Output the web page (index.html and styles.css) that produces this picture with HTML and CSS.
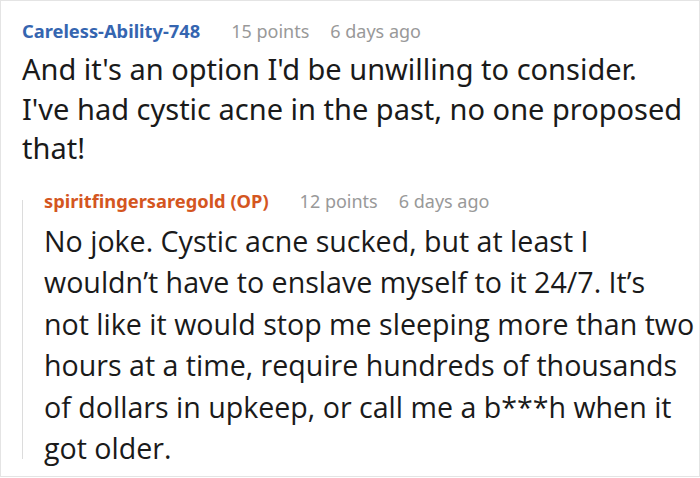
FILE: index.html
```html
<!DOCTYPE html>
<html>
<head>
<meta charset="utf-8">
<link rel="stylesheet" href="styles.css">
</head>
<body>
<div class="card">
  <div class="comment">
    <div class="meta">
      <span class="author">Careless-Ability-748</span>
      <span class="info">15 points</span>
      <span class="info">6 days ago</span>
    </div>
    <p class="body first">And it's an option I'd be unwilling to consider. I've had cystic acne in the past, no one proposed that!</p>
  </div>
  <div class="reply">
    <div class="thread"></div>
    <div class="comment">
      <div class="meta">
        <span class="author op">spiritfingersaregold (OP)</span>
        <span class="info">12 points</span>
        <span class="info">6 days ago</span>
      </div>
      <p class="body second">No joke. Cystic acne sucked, but at least I<br>wouldn’t have to enslave myself to it 24/7. It’s<br>not like it would stop me sleeping more than two<br>hours at a time, require hundreds of thousands<br>of dollars in upkeep, or call me a b***h when it<br>got older.</p>
    </div>
  </div>
</div>
</body>
</html>
```
FILE: styles.css
```css
html, body {
  margin: 0;
  padding: 0;
  background: #fff;
}
body {
  font-family: "Noto Sans", "Open Sans", sans-serif;
  color: #1a1a1b;
}
.card {
  box-sizing: border-box;
  width: 700px;
  height: 477px;
  border: 1px solid #e4e4e4;
  padding: 18px 15px 0 21px;
  overflow: hidden;
}
.meta {
  display: flex;
  align-items: baseline;
  font-size: 18px;
  line-height: 24px;
  white-space: nowrap;
}
.author {
  font-size: 18.3px;
  font-weight: 700;
  color: #3565b0;
  margin-right: 31px;
}
.author.op {
  color: #d4561f;
}
.info {
  color: #999;
  margin-right: 21px;
}
.body {
  margin: 0;
  font-size: 29px;
  color: #1a1a1a;
}
.body.first {
  line-height: 39.5px;
  margin-top: 6px;
}
.reply {
  display: flex;
  margin-top: 21px;
}
.thread {
  flex: 0 0 1px;
  background: #dcdcdc;
  margin: 11px 21px 10px 0;
}
.body.second {
  font-family: "Open Sans", sans-serif;
  font-size: 28.6px;
  line-height: 41.6px;
  margin-top: 7px;
  white-space: nowrap;
}
```
